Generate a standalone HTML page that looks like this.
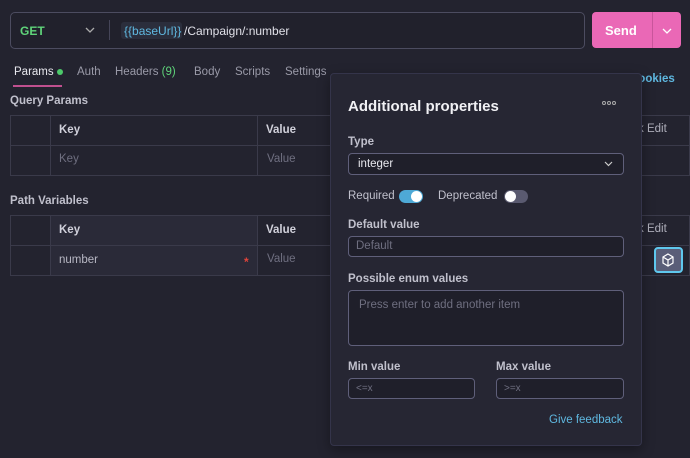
<!DOCTYPE html>
<html><head><style>
*{box-sizing:border-box;margin:0;padding:0}
body{width:690px;height:458px;background:#23232f;font-family:"Liberation Sans",sans-serif;color:#c8c8d4;position:relative;overflow:hidden;font-size:12px}
.a{position:absolute}
.lbl{font-size:11.5px;color:#c0c0cc;font-weight:bold}
.inp{border:1px solid #5f5f7a;border-radius:4px;background:#1f1f2a}
.ph{color:#6f6f80;font-size:11.5px}
</style></head><body>
<div class="a" style="left:10px;top:12px;width:575px;height:37px;border:1px solid #4c4c60;border-radius:5px;background:#21212c"></div>
<div class="a" style="left:20px;top:24px;color:#5fd47a;font-weight:bold;font-size:12px">GET</div>
<svg class="a" style="left:85px;top:27px" width="10" height="7"><path d="M1 1l4 4 4-4" stroke="#aaa" fill="none" stroke-width="1.3"/></svg>
<div class="a" style="left:109px;top:20px;width:1px;height:20px;background:#454558"></div>
<div class="a" style="left:121px;top:22px;width:61px;height:17px;background:#2b2e3c;border-radius:3px"></div>
<div class="a" style="left:124px;top:24px;font-size:12px;color:#5fb8e0">{{baseUrl}}</div>
<div class="a" style="left:184px;top:24px;font-size:12px;color:#e0e0e8">/Campaign/:number</div>
<div class="a" style="left:592px;top:12px;width:89px;height:36px;background:#ea68b6;border-radius:4px"></div>
<div class="a" style="left:652px;top:12px;width:1px;height:36px;background:#c9559b"></div>
<div class="a" style="left:605px;top:23px;font-size:13px;font-weight:bold;color:#fff">Send</div>
<svg class="a" style="left:662px;top:28px" width="10" height="6"><path d="M1 1l4 4 4-4" stroke="#fff" fill="none" stroke-width="1.3"/></svg>

<div class="a" style="left:14px;top:66px;font-size:11.5px;color:#e8e8ee">Params</div>
<div class="a" style="left:57px;top:69px;width:6px;height:6px;border-radius:50%;background:#4cc96a"></div>
<div class="a" style="left:13px;top:85px;width:49px;height:2px;background:#c0508f"></div>
<div class="a" style="left:77px;top:66px;font-size:11.5px;color:#9a9aa8">Auth</div>
<div class="a" style="left:115px;top:66px;font-size:11.5px;color:#9a9aa8">Headers <span style="color:#5fd47a">(9)</span></div>
<div class="a" style="left:194px;top:66px;font-size:11.5px;color:#9a9aa8">Body</div>
<div class="a" style="left:235px;top:66px;font-size:11.5px;color:#9a9aa8">Scripts</div>
<div class="a" style="left:285px;top:66px;font-size:11.5px;color:#9a9aa8">Settings</div>
<div class="a" style="left:630px;top:73px;font-size:11.5px;color:#5fb8e0;font-weight:bold">Cookies</div>

<div class="a lbl" style="left:10px;top:95px">Query Params</div>
<div class="a" style="left:10px;top:115px;width:680px;height:61px;border:1px solid #3a3a4a"></div>
<div class="a" style="left:10px;top:145px;width:680px;height:1px;background:#3a3a4a"></div>
<div class="a" style="left:50px;top:115px;width:1px;height:61px;background:#3a3a4a"></div>
<div class="a" style="left:257px;top:115px;width:1px;height:61px;background:#3a3a4a"></div>
<div class="a lbl" style="left:59px;top:124px;color:#d0d0da">Key</div>
<div class="a lbl" style="left:266px;top:124px;color:#d0d0da">Value</div>
<div class="a ph" style="left:59px;top:153px">Key</div>
<div class="a ph" style="left:267px;top:153px">Value</div>
<div class="a" style="left:638px;top:123px;font-size:11.5px;color:#b0b0bc">k Edit</div>

<div class="a lbl" style="left:10px;top:195px">Path Variables</div>
<div class="a" style="left:51px;top:215px;width:206px;height:60px;background:#2a2a38"></div>
<div class="a" style="left:10px;top:215px;width:680px;height:61px;border:1px solid #3a3a4a"></div>
<div class="a" style="left:10px;top:245px;width:680px;height:1px;background:#3a3a4a"></div>
<div class="a" style="left:50px;top:215px;width:1px;height:61px;background:#3a3a4a"></div>
<div class="a" style="left:257px;top:215px;width:1px;height:61px;background:#3a3a4a"></div>
<div class="a lbl" style="left:59px;top:224px;color:#d0d0da">Key</div>
<div class="a lbl" style="left:266px;top:224px;color:#d0d0da">Value</div>
<div class="a" style="left:59px;top:254px;font-size:11.5px;color:#b8b8c4">number</div>
<div class="a" style="left:244px;top:255px;color:#e0443a;font-weight:bold">*</div>
<div class="a ph" style="left:267px;top:253px">Value</div>
<div class="a" style="left:638px;top:223px;font-size:11.5px;color:#b0b0bc">k Edit</div>

<div class="a" style="left:654px;top:247px;width:29px;height:26px;border:2px solid #5fc8ee;border-radius:4px;background:#5a5e78"></div>
<svg class="a" style="left:661px;top:253px" width="14" height="14" viewBox="0 0 14 14"><path d="M7 1l5 3v6l-5 3-5-3V4z M2 4l5 3 5-3 M7 7v6" stroke="#fff" fill="none" stroke-width="1.2"/></svg>

<div class="a" style="left:330px;top:73px;width:312px;height:373px;background:#262633;border:1px solid #34344a;border-radius:4px;box-shadow:0 4px 12px rgba(0,0,0,.35)"></div>
<div class="a" style="left:348px;top:98px;font-size:15px;font-weight:bold;color:#f0f0f4">Additional properties</div>
<div class="a" style="left:602px;top:101px;width:4px;height:4px;border:1px solid #aaa;border-radius:50%"></div>
<div class="a" style="left:607px;top:101px;width:4px;height:4px;border:1px solid #aaa;border-radius:50%"></div>
<div class="a" style="left:612px;top:101px;width:4px;height:4px;border:1px solid #aaa;border-radius:50%"></div>
<div class="a lbl" style="left:348px;top:136px">Type</div>
<div class="a inp" style="left:348px;top:153px;width:276px;height:22px"></div>
<div class="a" style="left:358px;top:158px;font-size:11.5px;color:#e8e8ee">integer</div>
<svg class="a" style="left:604px;top:161px" width="9" height="6"><path d="M1 1l3.5 3.5L8 1" stroke="#ccc" fill="none" stroke-width="1.2"/></svg>
<div class="a lbl" style="left:348px;top:190px;font-weight:normal">Required</div>
<div class="a" style="left:399px;top:190px;width:24px;height:13px;border-radius:7px;background:#4ea9d6"></div>
<div class="a" style="left:411px;top:191px;width:11px;height:11px;border-radius:50%;background:#fff"></div>
<div class="a lbl" style="left:438px;top:190px;font-weight:normal">Deprecated</div>
<div class="a" style="left:504px;top:190px;width:24px;height:13px;border-radius:7px;background:#5a5a70"></div>
<div class="a" style="left:505px;top:191px;width:11px;height:11px;border-radius:50%;background:#fff"></div>
<div class="a lbl" style="left:348px;top:219px">Default value</div>
<div class="a inp" style="left:348px;top:236px;width:276px;height:21px"></div>
<div class="a ph" style="left:356px;top:240px">Default</div>
<div class="a lbl" style="left:348px;top:273px">Possible enum values</div>
<div class="a inp" style="left:348px;top:290px;width:276px;height:56px"></div>
<div class="a ph" style="left:359px;top:299px">Press enter to add another item</div>
<div class="a lbl" style="left:348px;top:361px">Min value</div>
<div class="a lbl" style="left:496px;top:361px">Max value</div>
<div class="a inp" style="left:348px;top:378px;width:127px;height:21px"></div>
<div class="a inp" style="left:496px;top:378px;width:128px;height:21px"></div>
<div class="a ph" style="left:356px;top:383px;font-size:10px">&lt;=x</div>
<div class="a ph" style="left:504px;top:383px;font-size:10px">&gt;=x</div>
<div class="a" style="left:549px;top:414px;font-size:11.5px;color:#5fb8e0">Give feedback</div>
</body></html>
